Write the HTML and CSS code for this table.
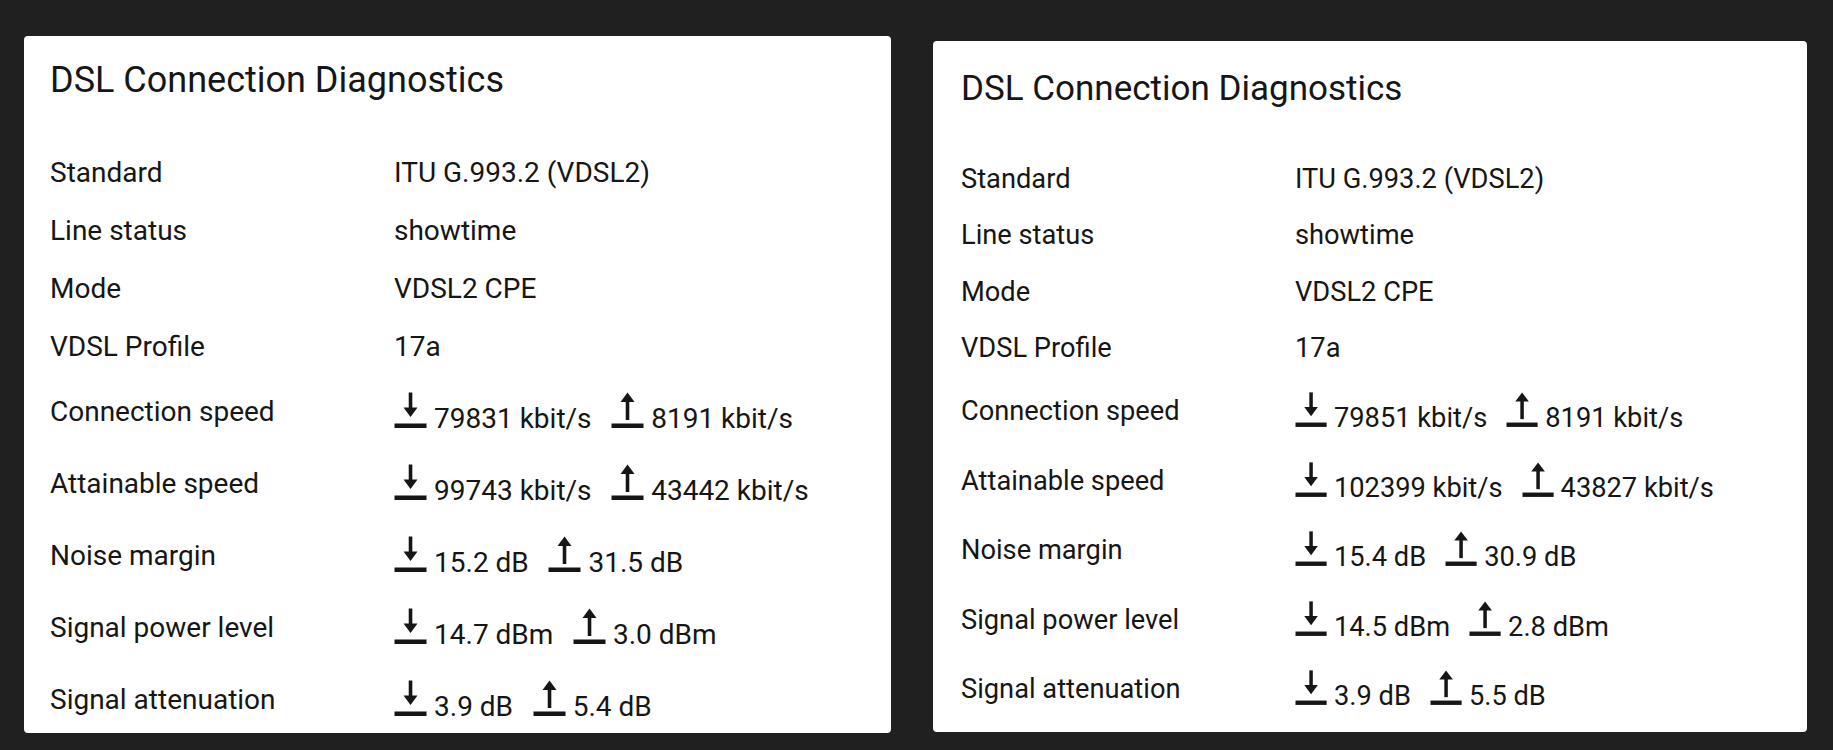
FILE: index.html
```html
<!DOCTYPE html>
<html lang="en">
<head>
    <meta charset="UTF-8">
    <meta name="viewport" content="width=device-width, initial-scale=1.0">
    <title>DSL Connection Diagnostics</title>
    <link rel="stylesheet" href="styles.css">
</head>
<body>
    <svg class="defs" width="0" height="0">
        <symbol id="ic-down" viewBox="0 0 32 40">
            <rect x="14.2" y="4.5" width="3.6" height="17"/>
            <polygon points="9,19.5 23,19.5 16,29"/>
            <rect x="0" y="35.5" width="32" height="4.5"/>
        </symbol>
        <symbol id="ic-up" viewBox="0 0 32 40">
            <polygon points="16,4.5 9,14 23,14"/>
            <rect x="14.2" y="12" width="3.6" height="20"/>
            <rect x="0" y="35.5" width="32" height="4.5"/>
        </symbol>
    </svg>

    <div class="board">
        <div class="card card--a">
            <h2 class="card__title">DSL Connection Diagnostics</h2>
            <div class="row"><div class="label">Standard</div><div class="value">ITU G.993.2 (VDSL2)</div></div>
            <div class="row"><div class="label">Line status</div><div class="value">showtime</div></div>
            <div class="row"><div class="label">Mode</div><div class="value">VDSL2 CPE</div></div>
            <div class="row"><div class="label">VDSL Profile</div><div class="value">17a</div></div>
            <div class="row">
                <div class="label">Connection speed</div>
                <div class="value value--rate">
                    <span class="rate"><svg class="icon"><use href="#ic-down"/></svg>79831 kbit/s</span>
                    <span class="rate"><svg class="icon"><use href="#ic-up"/></svg>8191 kbit/s</span>
                </div>
            </div>
            <div class="row">
                <div class="label">Attainable speed</div>
                <div class="value value--rate">
                    <span class="rate"><svg class="icon"><use href="#ic-down"/></svg>99743 kbit/s</span>
                    <span class="rate"><svg class="icon"><use href="#ic-up"/></svg>43442 kbit/s</span>
                </div>
            </div>
            <div class="row">
                <div class="label">Noise margin</div>
                <div class="value value--rate">
                    <span class="rate"><svg class="icon"><use href="#ic-down"/></svg>15.2 dB</span>
                    <span class="rate"><svg class="icon"><use href="#ic-up"/></svg>31.5 dB</span>
                </div>
            </div>
            <div class="row">
                <div class="label">Signal power level</div>
                <div class="value value--rate">
                    <span class="rate"><svg class="icon"><use href="#ic-down"/></svg>14.7 dBm</span>
                    <span class="rate"><svg class="icon"><use href="#ic-up"/></svg>3.0 dBm</span>
                </div>
            </div>
            <div class="row">
                <div class="label">Signal attenuation</div>
                <div class="value value--rate">
                    <span class="rate"><svg class="icon"><use href="#ic-down"/></svg>3.9 dB</span>
                    <span class="rate"><svg class="icon"><use href="#ic-up"/></svg>5.4 dB</span>
                </div>
            </div>
        </div>

        <div class="card card--b">
            <h2 class="card__title">DSL Connection Diagnostics</h2>
            <div class="row"><div class="label">Standard</div><div class="value">ITU G.993.2 (VDSL2)</div></div>
            <div class="row"><div class="label">Line status</div><div class="value">showtime</div></div>
            <div class="row"><div class="label">Mode</div><div class="value">VDSL2 CPE</div></div>
            <div class="row"><div class="label">VDSL Profile</div><div class="value">17a</div></div>
            <div class="row">
                <div class="label">Connection speed</div>
                <div class="value value--rate">
                    <span class="rate"><svg class="icon"><use href="#ic-down"/></svg>79851 kbit/s</span>
                    <span class="rate"><svg class="icon"><use href="#ic-up"/></svg>8191 kbit/s</span>
                </div>
            </div>
            <div class="row">
                <div class="label">Attainable speed</div>
                <div class="value value--rate">
                    <span class="rate"><svg class="icon"><use href="#ic-down"/></svg>102399 kbit/s</span>
                    <span class="rate"><svg class="icon"><use href="#ic-up"/></svg>43827 kbit/s</span>
                </div>
            </div>
            <div class="row">
                <div class="label">Noise margin</div>
                <div class="value value--rate">
                    <span class="rate"><svg class="icon"><use href="#ic-down"/></svg>15.4 dB</span>
                    <span class="rate"><svg class="icon"><use href="#ic-up"/></svg>30.9 dB</span>
                </div>
            </div>
            <div class="row">
                <div class="label">Signal power level</div>
                <div class="value value--rate">
                    <span class="rate"><svg class="icon"><use href="#ic-down"/></svg>14.5 dBm</span>
                    <span class="rate"><svg class="icon"><use href="#ic-up"/></svg>2.8 dBm</span>
                </div>
            </div>
            <div class="row">
                <div class="label">Signal attenuation</div>
                <div class="value value--rate">
                    <span class="rate"><svg class="icon"><use href="#ic-down"/></svg>3.9 dB</span>
                    <span class="rate"><svg class="icon"><use href="#ic-up"/></svg>5.5 dB</span>
                </div>
            </div>
        </div>
    </div>
</body>
</html>
```

FILE: styles.css
```css
*{
    padding: 0;
    margin: 0;
    box-sizing: border-box;
}
body{
    background-color: #202020;
    font-family: Roboto, "Liberation Sans", sans-serif;
    color: #161616;
}
.defs{
    position: absolute;
}
.board{
    display: flex;
    align-items: flex-start;
    gap: 42px;
    padding: 36px 24px 0;
}
.card{
    background-color: #fff;
    border-radius: 4px;
}
.card--a{
    width: 867px;
    height: 697px;
    font-size: 28px;
    padding: 23px 26px 0;
    --col: 344px;
}
.card--a .card__title{
    font-size: 36px;
    margin-bottom: 43px;
}
.card--b{
    width: 874px;
    height: 691px;
    margin-top: 5px;
    font-size: 27.25px;
    padding: 27px 28px 0;
    --col: 334px;
}
.card--b .card__title{
    font-size: 35px;
    margin-bottom: 42px;
}
.card--b .value--rate{
    margin: -0.4px 0;
}
.card__title{
    font-weight: 400;
    line-height: normal;
}
.row{
    display: grid;
    grid-template-columns: var(--col) 1fr;
    align-items: center;
    padding: 0.4286em 0;
    line-height: 1.2143em;
}
.value--rate{
    display: flex;
    align-items: baseline;
    gap: 0.7em;
}
.rate{
    display: inline-flex;
    align-items: baseline;
    gap: 0.25em;
    white-space: nowrap;
}
.icon{
    width: 1.18em;
    height: 1.4286em;
    fill: currentColor;
}
```
